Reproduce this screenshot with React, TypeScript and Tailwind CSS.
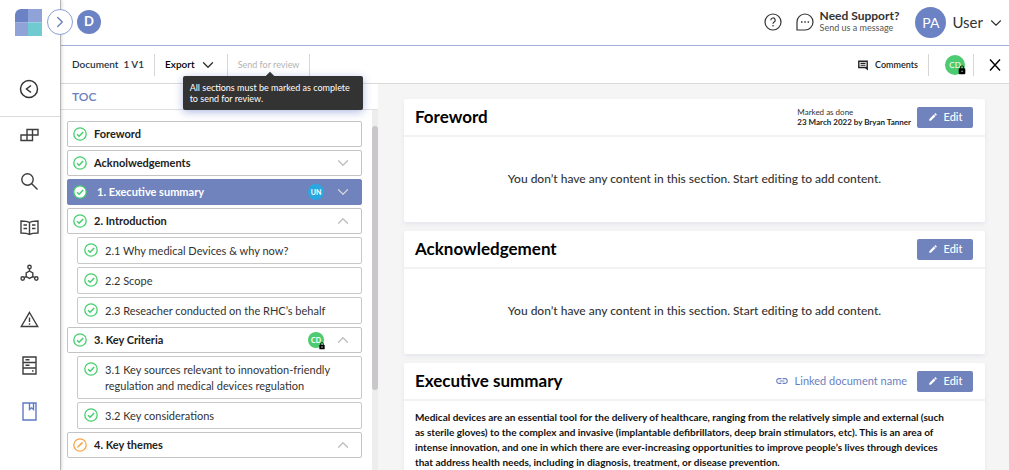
import { ReactNode } from 'react'
import clsx from 'clsx'
import { ChevronDown, ChevronRight, ChevronUp } from 'lucide-react'
import { MdEdit, MdLink, MdLock } from 'react-icons/md'

type Status = 'done' | 'draft'

interface Section {
  title: string
  status: Status
  open?: boolean
  active?: boolean
  user?: { initials: string; locked?: boolean }
  children?: string[]
}

const sections: Section[] = [
  { title: 'Foreword', status: 'done' },
  { title: 'Acknolwedgements', status: 'done', open: false },
  { title: '1. Executive summary', status: 'done', open: false, active: true, user: { initials: 'UN' } },
  {
    title: '2. Introduction',
    status: 'done',
    open: true,
    children: ['2.1 Why medical Devices & why now?', '2.2 Scope', '2.3 Reseacher conducted on the RHC’s behalf'],
  },
  {
    title: '3. Key Criteria',
    status: 'done',
    open: true,
    user: { initials: 'CD', locked: true },
    children: [
      '3.1 Key sources relevant to innovation-friendly regulation and medical devices regulation',
      '3.2 Key considerations',
    ],
  },
  { title: '4. Key themes', status: 'draft', open: true },
]

function StatusIcon({ status }: { status: Status }) {
  const color = status === 'done' ? '#45cf6e' : '#f9a54a'
  return (
    <svg viewBox="0 0 14 14" className="h-3.5 w-3.5 shrink-0" fill="none" aria-hidden="true">
      <circle cx="7" cy="7" r="6.2" fill="#fff" stroke={color} strokeWidth="1.3" />
      {status === 'done' ? (
        <path d="M4 7.3l2.1 2L10.2 5" stroke={color} strokeWidth="1.5" />
      ) : (
        <path d="M4.4 9.6l.4-1.4 4.2-4.2.9.9-4.2 4.2z" fill={color} stroke={color} strokeWidth=".5" />
      )}
    </svg>
  )
}

const navIcons: { label: string; path: ReactNode; active?: boolean }[] = [
  {
    label: 'Dashboard',
    path: <path d="M8 4.5h5.500v5.500H8zM13.500 4.500H19v5.500h-5.500zM2 10h6v5.500H2zM8 10h5.500v5.500H8z" />,
  },
  {
    label: 'Search',
    path: (
      <>
        <circle cx="8.500" cy="8.500" r="5.700" />
        <path d="M12.500 12.500l6 6" />
      </>
    ),
  },
  {
    label: 'Library',
    path: (
      <path d="M10.500 5.500C8 4 5 4 2 4v12c3 0 6 0 8.500 1.500C13 16 16 16 19 16V4c-3 0-6 0-8.500 1.500zM10.500 5.500v12M4.500 8h3.500M4.500 11.500h3.500M13 8h3.500M13 11.500h3.500" />
    ),
  },
  {
    label: 'Network',
    path: (
      <>
        <circle cx="10.500" cy="4" r="1.700" />
        <circle cx="3.700" cy="15.500" r="1.700" />
        <circle cx="17.300" cy="15.500" r="1.700" />
        <path d="M10.500 8l3.300 1.900v3.600l-3.300 1.900-3.300-1.900V9.900zM10.500 5.700V8M7.200 13.500l-2 1.200M13.800 13.500l2 1.200" />
      </>
    ),
  },
  { label: 'Alerts', path: <path d="M10.500 3.500L18.700 17.500H2.300zM10.500 8.500v4.500M10.500 14.300v1.500" /> },
  {
    label: 'Archive',
    path: <path d="M4 2h13v17H4zM4 7.500h13M4 13h13M6.500 4.800h4M6.500 10.300h4M13 16h1.500" />,
  },
  {
    label: 'Documents',
    active: true,
    path: <path d="M4 2h13v17H4zM10.500 2v6.500l2-1.700 2 1.700V2" />,
  },
]

function Divider() {
  return <span className="h-[22px] w-px shrink-0 bg-[#d6d6d6]" />
}

function Avatar({ initials, locked, large }: { initials: string; locked?: boolean; large?: boolean }) {
  return (
    <span
      className={clsx(
        'relative flex shrink-0 items-center justify-center rounded-full text-white',
        large ? 'h-5 w-5 text-[8px]' : 'h-4 w-4 text-[7px] font-bold',
        initials === 'UN' ? 'bg-[#29a7e1]' : 'bg-[#4ccb70]',
      )}
    >
      {initials}
      {locked && <MdLock className={clsx('absolute text-black', large ? '-right-0.5 bottom-0 h-2.5 w-2.5' : '-right-0.5 -bottom-0.5 h-2 w-2')} />}
    </span>
  )
}

function SideNav() {
  return (
    <aside className="relative z-10 flex w-[61px] shrink-0 flex-col border-r border-[#b5b5b5] bg-white shadow-[1px_0_3px_rgba(0,0,0,0.15)]">
      <div className="flex h-[45px] items-center pl-[15px]">
        <svg viewBox="0 0 27 27" className="h-[27px] w-[27px]" aria-label="Home">
          <path d="M13 0H6a6 6 0 0 0-6 6v7.500h13z" fill="#6b82c4" />
          <path d="M13 0h14v13.500H13z" fill="#8fa3d8" />
          <path d="M0 13.500h13V27H0z" fill="#8fa3d8" />
          <path d="M13 13.500h14V27H13z" fill="#6fcbd0" />
        </svg>
      </div>
      <button
        aria-label="Expand menu"
        className="absolute top-[9px] -right-[13px] flex h-[26px] w-[26px] items-center justify-center rounded-full border border-[#8c9fd6] bg-white text-[#6b7fbf]"
      >
        <ChevronRight size={18} strokeWidth={1.8} />
      </button>
      <div className="flex h-[72px] justify-center border-b border-[#dcdcdc] pt-[34px] pr-0.5">
        <button aria-label="Back" className="h-5 w-5">
          <svg viewBox="0 0 20 20" className="h-5 w-5" fill="none" stroke="#333" strokeWidth="1.500">
            <circle cx="10" cy="10" r="8.500" />
            <path d="M12 6.500L7.500 10l4.500 3.500" />
          </svg>
        </button>
      </div>
      <nav className="flex flex-col items-center gap-[25px] pt-2 pr-0.5">
        {navIcons.map((icon) => (
          <a key={icon.label} href="#" aria-label={icon.label} className={icon.active ? 'text-[#5f79c4]' : 'text-[#3d3d3d]'}>
            <svg viewBox="0 0 21 21" className="h-[21px] w-[21px]" fill="none" stroke="currentColor" strokeWidth="1.400">
              {icon.path}
            </svg>
          </a>
        ))}
      </nav>
    </aside>
  )
}

function Header() {
  return (
    <header className="flex h-[46px] shrink-0 items-center border-b border-[#a3b0dc] bg-white pr-1 pl-4">
      <span className="mb-0.5 flex h-6 w-6 items-center justify-center rounded-full bg-[#6b82c4] text-[13px] font-bold text-white">
        D
      </span>
      <button aria-label="Help" className="mr-3.5 mb-0.5 ml-auto">
        <svg viewBox="0 0 18 18" className="h-[18px] w-[18px]" fill="none" stroke="#333" strokeWidth="1.200">
          <circle cx="9" cy="9" r="8" />
          <path d="M6.800 7.200a2.200 2.200 0 1 1 3.300 1.900c-.7.4-1.100.8-1.100 1.600M9 12v1.400" />
        </svg>
      </button>
      <a href="#" className="mb-0.5 flex items-center gap-1.5">
        <svg viewBox="0 0 18 18" className="h-[18px] w-[18px]" fill="none" stroke="#333" strokeWidth="1.200">
          <path d="M1 17V9a8 8 0 1 1 8 8z" />
          <path d="M5 9h1.500M8.300 9h1.500M11.600 9h1.500" strokeWidth="1.600" />
        </svg>
        <span className="flex flex-col">
          <span className="text-[12px] leading-3 font-bold text-[#333]">Need Support?</span>
          <span className="text-[9px] leading-3 text-[#555]">Send us a message</span>
        </span>
      </a>
      <span className="ml-4 flex h-[31px] w-[31px] items-center justify-center rounded-full bg-[#6b82c4] text-[14px] text-white">
        PA
      </span>
      <button className="ml-1.5 flex items-center gap-1 text-[15px] text-[#333]">
        User
        <ChevronDown size={18} strokeWidth={1.5} />
      </button>
    </header>
  )
}

function Toolbar() {
  return (
    <div className="flex h-[38px] shrink-0 items-center border-b border-[#d9d9d9] bg-white pr-[7px] pl-[11px] text-[10px]">
      <span className="mr-2.5 font-semibold whitespace-pre text-[#22343f]">Document  1 V1</span>
      <Divider />
      <button className="mx-2.5 flex items-center gap-1 font-semibold text-black">
        Export
        <ChevronDown size={18} strokeWidth={1.8} className="text-[#333]" />
      </button>
      <Divider />
      <div className="relative mx-2.5 flex">
        <button disabled aria-describedby="review-tip" className="text-[9px] text-[#b3b3b3]">
          Send for review
        </button>
        <div
          id="review-tip"
          role="tooltip"
          className="absolute top-[18px] -left-[55px] z-20 w-[180px] rounded-[2px] bg-[#333] px-[7px] py-[6px] text-[9px] leading-[11px] text-white shadow-[0_2px_8px_rgba(80,100,190,0.45)]"
        >
          <span className="absolute -top-[3px] left-[84px] h-1.5 w-1.5 rotate-45 bg-[#333]" />
          All sections must be marked as complete to send for review.
        </div>
      </div>
      <Divider />
      <button className="mr-2.5 ml-auto flex items-center gap-1.5 text-[9px] font-semibold text-[#222]">
        <svg viewBox="0 0 12 12" className="h-3 w-3" fill="none" stroke="#222" aria-hidden="true">
          <path d="M1.800 2.200h8.400v6.300H1.800z" strokeWidth="1.400" />
          <path d="M3.500 4.400h5M3.500 6.300h5" strokeWidth="1.100" />
          <path d="M8 9h3v2.500z" fill="#222" stroke="none" />
        </svg>
        Comments
      </button>
      <Divider />
      <span className="mr-2 ml-4">
        <Avatar initials="CD" locked large />
      </span>
      <Divider />
      <button aria-label="Close" className="ml-3.5">
        <svg viewBox="0 0 14 14" className="h-3.5 w-3.5" stroke="#000" strokeWidth="1.400">
          <path d="M2 1.500l10 11M12 1.500l-10 11" />
        </svg>
      </button>
    </div>
  )
}

function TocRow({ section }: { section: Section }) {
  const Chevron = section.open ? ChevronUp : ChevronDown
  return (
    <a
      href="#"
      className={clsx(
        'flex h-[26px] items-center rounded-[2px] border px-[5px] text-[11px] font-bold',
        section.active ? 'border-[#7083bd] bg-[#7083bd] text-white' : 'border-[#c4c4c4] bg-white text-[#222]',
      )}
    >
      <StatusIcon status={section.status} />
      <span className={clsx('flex-1', section.active ? 'ml-2.5' : 'ml-[7px]')}>{section.title}</span>
      {section.user && <Avatar {...section.user} />}
      {section.open !== undefined && (
        <Chevron size={18} strokeWidth={1.6} className={clsx('mr-1 ml-2.5', section.active ? 'text-[#d5d5d5]' : 'text-[#bdbdbd]')} />
      )}
    </a>
  )
}

function Toc() {
  return (
    <div className="flex w-[317px] shrink-0 flex-col bg-white">
      <h2 className="h-[26px] border-b border-[#e0e0e0] pl-[11px] text-[12px] leading-[25px] font-semibold text-[#6b7fbf]">TOC</h2>
      <div className="flex min-h-0 flex-1">
        <ul className="flex flex-1 flex-col gap-[3px] overflow-hidden pt-[11px] pr-2.5 pl-1.5">
          {sections.map((section) => (
            <li key={section.title} className="flex flex-col gap-[3px]">
              <TocRow section={section} />
              {section.children && (
                <ul className="flex flex-col gap-[3px] pl-2.5">
                  {section.children.map((title) => (
                    <li key={title}>
                      <a
                        href="#"
                        className="flex gap-[7px] rounded-[2px] border border-[#c9c9c9] bg-white pt-[5px] pr-6 pb-1 pl-1.5 text-[11px] leading-4 text-[#333]"
                      >
                        <StatusIcon status="done" />
                        {title}
                      </a>
                    </li>
                  ))}
                </ul>
              )}
            </li>
          ))}
        </ul>
        {/* Scroll track */}
        <div className="w-1.5 bg-[#ededed] pt-4">
          <div className="h-[264px] rounded-full bg-[#c9c7c9]" />
        </div>
      </div>
    </div>
  )
}

function Card({ title, meta, children }: { title: string; meta?: ReactNode; children: ReactNode }) {
  return (
    <section className="shrink-0 rounded-[2px] bg-white shadow-[0_2px_4px_rgba(110,120,180,0.12)]">
      <div className="flex h-[38px] items-center border-b-2 border-[#f2f2f3] pr-3 pl-[11px]">
        <h2 className="text-[17px] font-bold text-black">{title}</h2>
        <div className="mr-1.5 ml-auto">{meta}</div>
        <button className="flex h-[21px] w-14 items-center justify-center gap-1.5 rounded-[2px] bg-[#7083bd] text-[11px] font-medium text-white">
          <MdEdit className="h-2.5 w-2.5" />
          Edit
        </button>
      </div>
      {children}
    </section>
  )
}

function EmptyBody() {
  return (
    <p className="flex h-[85px] items-center justify-center pb-0.5 text-[12px] font-medium text-[#333]">
      You don’t have any content in this section. Start editing to add content.
    </p>
  )
}

export default function App() {
  return (
    <div className="flex h-screen overflow-hidden bg-white font-[Lato,sans-serif]">
      <SideNav />
      <div className="flex min-w-0 flex-1 flex-col">
        <Header />
        <Toolbar />
        <div className="flex min-h-0 flex-1">
          <Toc />
          <main className="flex min-w-0 flex-1 flex-col gap-[9px] overflow-hidden bg-[#f5f5f5] pt-[15px] pr-6 pl-[26px]">
            <Card
              title="Foreword"
              meta={
                <p className="text-[8px] leading-[10px] text-[#333]">
                  Marked as done
                  <br />
                  <span className="font-bold text-[#222]">23 March 2022 by Bryan Tanner</span>
                </p>
              }
            >
              <EmptyBody />
            </Card>
            <Card title="Acknowledgement">
              <EmptyBody />
            </Card>
            <Card
              title="Executive summary"
              meta={
                <a href="#" className="mr-1 flex items-center gap-1.5 text-[11px] text-[#6b7fbf]">
                  <MdLink className="h-3.5 w-3.5" />
                  Linked document name
                </a>
              }
            >
              <p className="px-[11px] pt-[9px] pb-6 text-[10px] leading-[15px] font-bold text-[#111]">
                Medical devices are an essential tool for the delivery of healthcare, ranging from the relatively simple and external (such
                <br />
                as sterile gloves) to the complex and invasive (implantable defibrillators, deep brain stimulators, etc). This is an area of
                <br />
                intense innovation, and one in which there are ever-increasing opportunities to improve people’s lives through devices
                <br />
                that address health needs, including in diagnosis, treatment, or disease prevention.
              </p>
            </Card>
          </main>
        </div>
      </div>
    </div>
  )
}
